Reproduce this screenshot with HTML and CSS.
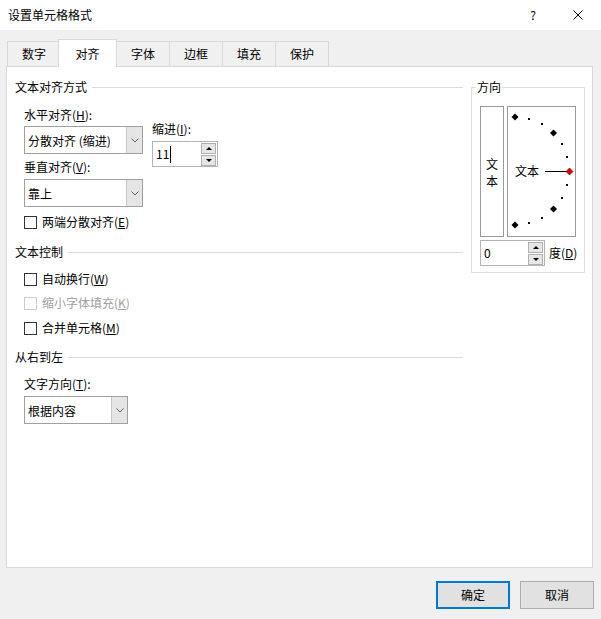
FILE: index.html
```html
<!DOCTYPE html>
<html lang="zh-CN">
<head>
<meta charset="utf-8">
<title>设置单元格格式</title>
<link rel="stylesheet" href="styles.css">
</head>
<body>
<div class="titlebar">
  <span class="title">设置单元格格式</span>
  <span class="help">?</span>
  <svg class="close" width="10" height="10" viewBox="0 0 10 10"><path d="M0.5 0.5 L9.5 9.5 M9.5 0.5 L0.5 9.5" stroke="#000" stroke-width="1"/></svg>
</div>

<div class="tabs">
  <div class="tab">数字</div>
  <div class="tab active">对齐</div>
  <div class="tab">字体</div>
  <div class="tab">边框</div>
  <div class="tab">填充</div>
  <div class="tab">保护</div>
</div>

<div class="panel">
  <div class="left">
    <div class="group-h">文本对齐方式</div>
    <div class="indent">
      <div class="align-grid">
        <div class="col-a">
          <div class="lbl lbl-h">水平对齐(<u>H</u>):</div>
          <div class="combo combo-w">
            <span class="val">分散对齐 (缩进)</span>
            <span class="arrow"><svg width="8" height="5" viewBox="0 0 8 5"><path d="M0.5 0.5 L4 4 L7.5 0.5" fill="none" stroke="#606060" stroke-width="1"/></svg></span>
          </div>
          <div class="lbl lbl-v">垂直对齐(<u>V</u>):</div>
          <div class="combo combo-w combo-v">
            <span class="val">靠上</span>
            <span class="arrow"><svg width="8" height="5" viewBox="0 0 8 5"><path d="M0.5 0.5 L4 4 L7.5 0.5" fill="none" stroke="#606060" stroke-width="1"/></svg></span>
          </div>
        </div>
        <div class="col-b">
          <div class="lbl">缩进(<u>I</u>):</div>
          <div class="spin spin-indent">
            <span class="spin-val">11</span><span class="caret"></span>
            <span class="spin-btns">
              <span class="sbtn"><span class="tri-up"></span></span>
              <span class="sbtn"><span class="tri-down"></span></span>
            </span>
          </div>
        </div>
      </div>
      <div class="check check-e"><span class="box"></span>两端分散对齐(<u>E</u>)</div>
    </div>

    <div class="group-h group-2">文本控制</div>
    <div class="indent">
      <div class="check check-w"><span class="box"></span>自动换行(<u>W</u>)</div>
      <div class="check check-k disabled"><span class="box"></span>缩小字体填充(<u>K</u>)</div>
      <div class="check check-m"><span class="box"></span>合并单元格(<u>M</u>)</div>
    </div>

    <div class="group-h group-3">从右到左</div>
    <div class="indent">
      <div class="lbl lbl-t">文字方向(<u>T</u>):</div>
      <div class="combo combo-t">
        <span class="val">根据内容</span>
        <span class="arrow"><svg width="8" height="5" viewBox="0 0 8 5"><path d="M0.5 0.5 L4 4 L7.5 0.5" fill="none" stroke="#606060" stroke-width="1"/></svg></span>
      </div>
    </div>
  </div>

  <fieldset class="orient">
    <legend>方向</legend>
    <div class="orient-boxes">
      <div class="vbox"><span>文</span><span>本</span></div>
      <div class="dial">
        <svg width="67" height="129" viewBox="0 0 67 129">
          <g fill="#000">
            <polygon points="7,6.5 10.5,10 7,13.5 3.5,10"/>
            <rect x="20" y="11" width="2" height="2"/>
            <rect x="33" y="16" width="2" height="2"/>
            <polygon points="45.5,22.5 49,26 45.5,29.5 42,26"/>
            <rect x="53" y="36" width="2" height="2"/>
            <rect x="58" y="49" width="2" height="2"/>
            <rect x="58" y="77" width="2" height="2"/>
            <rect x="53" y="90" width="2" height="2"/>
            <polygon points="45.5,98.5 49,102 45.5,105.5 42,102"/>
            <rect x="33" y="110" width="2" height="2"/>
            <rect x="20" y="115" width="2" height="2"/>
            <polygon points="7,114.5 10.5,118 7,121.5 3.5,118"/>
          </g>
          <line x1="37" y1="64.5" x2="59" y2="64.5" stroke="#000" stroke-width="1"/>
          <polygon points="61.5,61 65,64.5 61.5,68 58,64.5" fill="#e00000" stroke="#600" stroke-width="0.6"/>
          <text x="7" y="69" font-size="12" font-family="Noto Sans CJK SC, sans-serif" fill="#000">文本</text>
        </svg>
      </div>
    </div>
    <div class="deg-row">
      <div class="spin spin-deg">
        <span class="spin-val">0</span>
        <span class="spin-btns">
          <span class="sbtn"><span class="tri-up"></span></span>
          <span class="sbtn"><span class="tri-down"></span></span>
        </span>
      </div>
      <span class="deg-lbl">度(<u>D</u>)</span>
    </div>
  </fieldset>
</div>

<div class="btns">
  <div class="btn primary">确定</div>
  <div class="btn">取消</div>
</div>
</body>
</html>
```

FILE: styles.css
```css
* { box-sizing: border-box; }

body {
  margin: 0;
  width: 601px;
  height: 619px;
  overflow: hidden;
  background: #f0f0f0;
  font-family: "Noto Sans CJK SC", "Noto Sans", sans-serif;
  font-size: 12px;
  color: #000;
}

u { text-decoration: underline; text-underline-offset: 1px; }

/* title bar */
.titlebar {
  height: 30px;
  background: #fff;
  display: flex;
  align-items: center;
  padding-left: 8px;
}
.title { line-height: 16px; }
.help { margin-left: auto; margin-right: 37px; line-height: 16px; }
.close { margin-right: 18px; display: block; }

/* tabs */
.tabs {
  display: flex;
  align-items: flex-end;
  padding-left: 7px;
  margin-top: 9px;
}
.tab {
  width: 54px;
  height: 25px;
  margin-left: -1px;
  border: 1px solid #d9d9d9;
  border-bottom: none;
  background: #f0f0f0;
  display: flex;
  align-items: center;
  justify-content: center;
  line-height: 16px;
}
.tab:first-child { margin-left: 0; }
.tab.active {
  width: 59px;
  height: 28px;
  margin-left: -3px;
  margin-bottom: -1px;
  background: #fff;
  position: relative;
  z-index: 1;
}

/* panel */
.panel {
  margin: 0 8px 0 6px;
  height: 502px;
  background: #fff;
  border: 1px solid #d9d9d9;
  display: flex;
  align-items: flex-start;
  gap: 8px;
  padding: 12px 0 0 8px;
}
.left { width: 448px; }

.group-h {
  display: flex;
  align-items: center;
  line-height: 16px;
}
.group-h::after {
  content: "";
  flex: 1;
  height: 1px;
  background: #dcdcdc;
  margin-left: 5px;
}
.group-2 { margin-top: 14px; }
.group-3 { margin-top: 13px; }

.indent { padding-left: 9px; }

.lbl { line-height: 16px; }
.lbl-h { margin-top: 12px; }
.lbl-v { margin-top: 5px; }
.lbl-t { margin-top: 11px; }

.align-grid { display: flex; }
.col-b { margin-left: 9px; padding-top: 26px; }

.combo {
  display: flex;
  height: 28px;
  margin-top: 3px;
  border: 1px solid #a0a0a0;
  background: #fff;
}
.combo-w { width: 119px; }
.combo-v { margin-top: 4px; }
.combo-t { width: 104px; margin-top: 4px; }
.combo .val {
  flex: 1;
  padding-left: 3px;
  display: flex;
  align-items: center;
  white-space: nowrap;
}
.combo .arrow {
  width: 16px;
  background: #e5e5e5;
  border-left: 1px solid #c8c8c8;
  display: flex;
  align-items: center;
  justify-content: center;
}

/* spin boxes */
.spin {
  display: flex;
  align-items: center;
  height: 26px;
  border: 1px solid #b4b4b4;
  background: #fff;
  padding-left: 3px;
  flex: none;
}
.spin-indent { width: 66px; margin-top: 4px; }
.spin-deg { width: 65px; }
.spin-val { line-height: 16px; }
.caret { width: 1px; height: 17px; background: #000; margin-left: 1px; }
.spin-btns {
  margin-left: auto;
  margin-right: 1px;
  display: flex;
  flex-direction: column;
  gap: 1px;
}
.sbtn {
  width: 15px;
  height: 11px;
  border: 1px solid #b0b0b0;
  background: #e6e6e6;
  display: flex;
  align-items: center;
  justify-content: center;
}
.tri-up {
  width: 0; height: 0;
  border-left: 3px solid transparent;
  border-right: 3px solid transparent;
  border-bottom: 3px solid #000;
}
.tri-down {
  width: 0; height: 0;
  border-left: 3px solid transparent;
  border-right: 3px solid transparent;
  border-top: 3px solid #000;
}

/* checkboxes */
.check {
  display: flex;
  align-items: center;
  line-height: 16px;
}
.check .box {
  width: 13px;
  height: 13px;
  border: 1px solid #333;
  background: #fff;
  margin-right: 5px;
}
.check.disabled { color: #a0a0a0; }
.check.disabled .box { border-color: #cccccc; }
.check-e { margin-top: 7px; }
.check-w { margin-top: 11px; }
.check-k { margin-top: 8px; }
.check-m { margin-top: 9px; }

/* orientation */
.orient {
  width: 114px;
  margin: 0;
  padding: 0 0 6px 8px;
  border: 1px solid #dcdcdc;
  min-width: 0;
}
.orient legend {
  padding: 0 1px;
  margin-left: -4px;
  line-height: 16px;
}
.orient-boxes {
  display: flex;
  gap: 3px;
  margin-top: 11px;
}
.vbox {
  width: 24px;
  height: 131px;
  border: 1px solid #9a9a9a;
  display: flex;
  flex-direction: column;
  align-items: center;
  justify-content: center;
  line-height: 17px;
}
.dial {
  width: 69px;
  height: 131px;
  border: 1px solid #9a9a9a;
}
.dial svg { display: block; }
.deg-row {
  display: flex;
  align-items: center;
  margin-top: 3px;
  white-space: nowrap;
}
.deg-lbl { margin-left: 4px; line-height: 16px; }

/* buttons */
.btns {
  display: flex;
  justify-content: flex-end;
  gap: 10px;
  padding-right: 7px;
  margin-top: 13px;
}
.btn {
  width: 74px;
  height: 28px;
  border: 1px solid #adadad;
  background: #e1e1e1;
  display: flex;
  align-items: center;
  justify-content: center;
  line-height: 16px;
}
.btn.primary { border: 2px solid #0078d7; }
```
